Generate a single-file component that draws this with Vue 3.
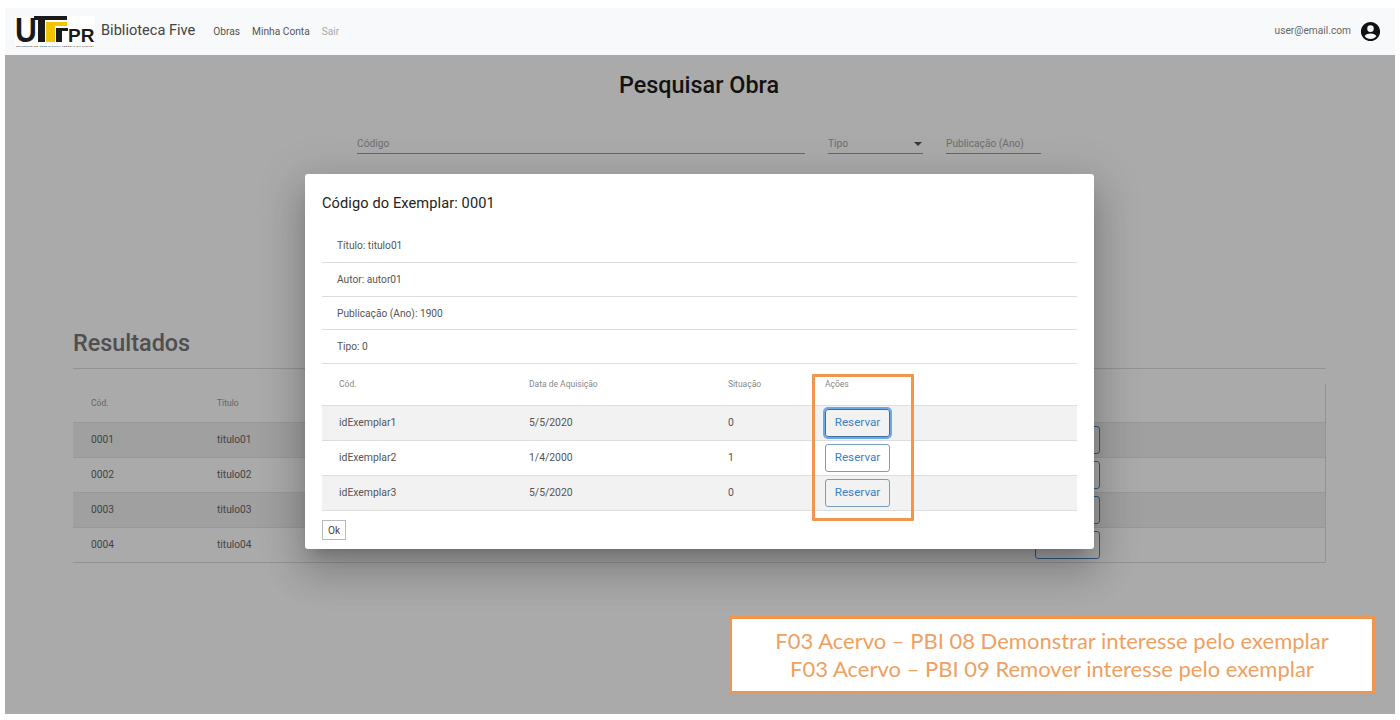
<template>
  <div class="frame">
    <nav class="navbar">
      <svg class="logo" width="80" height="31" viewBox="0 0 80 31">
        <rect width="80" height="31" fill="#fff" />
        <text transform="translate(0 26) scale(0.84 1)" class="logo-big">U</text>
        <path d="M19 0h33v4H30v22h-7V4h-4z" fill="#1a1a1a" />
        <path d="M31 6h21v4H40v16h-9z" fill="#f5c400" />
        <path d="M41 12h12v3h-6v11h-6z" fill="#1a1a1a" />
        <text x="53" y="26" class="logo-pr">PR</text>
        <text x="1" y="30.500" class="logo-small" textLength="78">UNIVERSIDADE TECNOLÓGICA FEDERAL DO PARANÁ</text>
      </svg>
      <span class="brand">Biblioteca Five</span>
      <a class="nav-link">Obras</a>
      <a class="nav-link">Minha Conta</a>
      <a class="nav-link muted">Sair</a>
      <span class="user">user@email.com</span>
      <svg class="user-icon" width="23" height="23" viewBox="0 0 24 24">
        <path fill="#111" d="M12 2C6.48 2 2 6.48 2 12s4.48 10 10 10 10-4.48 10-10S17.52 2 12 2zm0 3.6a3.4 3.4 0 1 1 0 6.8 3.4 3.4 0 0 1 0-6.8zm0 14.2c-2.6 0-4.9-1.2-6.2-3.1.9-1.6 4.2-2.5 6.2-2.5s5.300.9 6.200 2.500c-1.300 1.900-3.600 3.100-6.200 3.100z" />
      </svg>
    </nav>

    <main class="content">
      <h1 class="page-title">Pesquisar Obra</h1>
      <div class="filters">
        <div class="field code">Código</div>
        <div class="field type">Tipo<span class="caret"></span></div>
        <div class="field year">Publicação (Ano)</div>
      </div>

      <h2 class="results-title">Resultados</h2>
      <div class="results">
        <div class="result-row head">
          <span>Cód.</span>
          <span>Título</span>
        </div>
        <div v-for="obra in obras" :key="obra.cod" class="result-row">
          <span>{{ obra.cod }}</span>
          <span>{{ obra.titulo }}</span>
          <button class="btn-outline ghost"></button>
        </div>
      </div>
    </main>

    <div class="overlay"></div>

    <section class="modal">
      <h3 class="modal-title">Código do Exemplar: 0001</h3>
      <ul class="info">
        <li v-for="line in info" :key="line">{{ line }}</li>
      </ul>
      <div class="ex-row ex-head">
        <span>Cód.</span>
        <span>Data de Aquisição</span>
        <span>Situação</span>
        <span>Ações</span>
      </div>
      <div v-for="(ex, i) in exemplares" :key="ex.id" class="ex-row">
        <span>{{ ex.id }}</span>
        <span>{{ ex.data }}</span>
        <span>{{ ex.situacao }}</span>
        <span><button class="btn-outline" :class="{ focused: i === 0 }">Reservar</button></span>
      </div>
      <button class="btn-ok">Ok</button>
      <div class="highlight"></div>
    </section>

    <aside class="callout">
      <div>F03 Acervo – PBI 08 Demonstrar interesse pelo exemplar</div>
      <div>F03 Acervo – PBI 09 Remover interesse pelo exemplar</div>
    </aside>
  </div>
</template>

<script setup>
const obras = [
  { cod: '0001', titulo: 'titulo01' },
  { cod: '0002', titulo: 'titulo02' },
  { cod: '0003', titulo: 'titulo03' },
  { cod: '0004', titulo: 'titulo04' }
]

const info = ['Título: titulo01', 'Autor: autor01', 'Publicação (Ano): 1900', 'Tipo: 0']

const exemplares = [
  { id: 'idExemplar1', data: '5/5/2020', situacao: '0' },
  { id: 'idExemplar2', data: '1/4/2000', situacao: '1' },
  { id: 'idExemplar3', data: '5/5/2020', situacao: '0' }
]
</script>

<style>
html,
body {
  margin: 0;
  background: #fff;
}
</style>

<style scoped>
.frame {
  position: relative;
  box-sizing: border-box;
  width: 1390px;
  height: 706px;
  margin: 8px 0 0 5px;
  overflow: hidden;
  font-family: Roboto, "Liberation Sans", sans-serif;
  color: #212529;
  background: #fff;
}

.navbar {
  position: relative;
  z-index: 3;
  display: flex;
  align-items: center;
  height: 47px;
  padding: 0 13px 0 10px;
  box-sizing: border-box;
  background: #f8f9fa;
}

.logo {
  margin-right: 6px;
  overflow: visible;
}

.logo-big {
  font: 700 36px "Liberation Sans", sans-serif;
  fill: #1a1a1a;
}

.logo-pr {
  font: 700 19px "Liberation Sans", sans-serif;
  fill: #1a1a1a;
}

.logo-small {
  font: 700 2.400px "Liberation Sans", sans-serif;
  fill: #333;
}

.brand {
  margin-right: 18px;
  font-size: 14.600px;
  color: #444;
  position: relative;
  top: -2px;
}

.nav-link {
  margin-right: 12px;
  font-size: 10.200px;
  color: #555;
}

.nav-link.muted {
  color: #aaa;
}

.user {
  margin-left: auto;
  margin-right: 8px;
  font-size: 10.200px;
  color: #666;
  position: relative;
  top: -1px;
}

.page-title {
  margin: 0;
  padding: 17px 2px 0 0;
  font-size: 23.400px;
  line-height: 26px;
  font-weight: 500;
  text-align: center;
  color: #1c1c1c;
}

.filters {
  display: flex;
  gap: 23px;
  margin: 30px 0 0 352px;
}

.field {
  box-sizing: border-box;
  height: 26px;
  padding-top: 10px;
  font-size: 10.200px;
  line-height: 12px;
  color: #a8a8a8;
  border-bottom: 1px solid #999;
  position: relative;
}

.code {
  width: 448px;
}

.type {
  width: 95px;
}

.year {
  width: 95px;
}

.caret {
  position: absolute;
  right: 1px;
  top: 14px;
  border: 4px solid transparent;
  border-top-color: #555;
  border-bottom: 0;
}

.results-title {
  margin: 173px 0 0 68px;
  width: 1253px;
  padding-bottom: 9px;
  font-size: 23.400px;
  line-height: 32px;
  font-weight: 500;
  color: #777;
  border-bottom: 1px solid #ddd;
}

.results {
  box-sizing: border-box;
  width: 1253px;
  margin: 15px 0 0 68px;
  border-right: 1px solid #ddd;
  font-size: 10.200px;
  color: #666;
}

.result-row {
  display: grid;
  grid-template-columns: 126px 818px 65px;
  align-items: center;
  height: 35px;
  padding-left: 18px;
  padding-bottom: 1px;
  border-top: 1px solid #e4e4e4;
  box-sizing: border-box;
}

.result-row > button {
  margin-bottom: -1px;
}

.result-row:nth-child(even) {
  background: #f0f0f0;
}

.result-row:last-child {
  height: 36px;
  border-bottom: 1px solid #ddd;
}

.head {
  height: 38px;
  border-top: 0;
  font-size: 8.500px;
  color: #999;
}

.overlay {
  position: absolute;
  inset: 0;
  z-index: 1;
  background: rgba(0, 0, 0, 0.333);
}

.modal {
  position: absolute;
  z-index: 2;
  left: 300px;
  top: 166px;
  width: 789px;
  height: 375px;
  box-sizing: border-box;
  padding: 0 17px;
  background: #fff;
  border-radius: 3px;
  box-shadow: 0 11px 15px -7px rgba(0, 0, 0, 0.2), 0 24px 38px 3px rgba(0, 0, 0, 0.14), 0 9px 46px 8px rgba(0, 0, 0, 0.12);
}

.modal-title {
  margin: 0;
  padding-top: 20px;
  height: 55px;
  box-sizing: border-box;
  font-size: 14.600px;
  line-height: 18px;
  font-weight: 400;
  letter-spacing: 0.1px;
  color: #222;
}

.info {
  margin: 0;
  padding: 0;
  list-style: none;
  font-size: 10.200px;
  color: #555;
}

.info li {
  display: flex;
  align-items: center;
  height: 33.750px;
  box-sizing: border-box;
  padding-left: 15px;
  border-bottom: 1px solid #ddd;
}

.info li:nth-child(3) {
  padding-top: 1px;
}

.ex-row {
  display: grid;
  grid-template-columns: 190px 199px 97px 1fr;
  align-items: center;
  height: 35px;
  box-sizing: border-box;
  padding-left: 17px;
  padding-bottom: 1px;
  font-size: 10.400px;
  color: #555;
  border-bottom: 1px solid #ddd;
}

.ex-row:nth-child(even) {
  background: #f2f2f2;
}

.ex-head {
  height: 42px;
  font-size: 8.500px;
  color: #888;
  padding-bottom: 2px;
}

.btn-outline {
  display: block;
  box-sizing: border-box;
  width: 65px;
  height: 28px;
  margin: 0;
  padding: 0 0 2px;
  border: 1px solid #7a9dbc;
  border-radius: 3px;
  background: transparent;
  color: #3a80c8;
  font-family: inherit;
  font-size: 11.700px;
}

.btn-outline.focused {
  border-color: #3d6f9f;
  box-shadow: 0 0 0 2px #6aa8ea;
}

.btn-outline.ghost {
  border-color: #4f86c0;
}

.btn-ok {
  display: block;
  box-sizing: border-box;
  width: 24px;
  height: 20px;
  margin-top: 9px;
  padding: 0;
  border: 1px solid #bbb;
  background: #fff;
  color: #444;
  font-family: inherit;
  font-size: 10.200px;
}

.highlight {
  position: absolute;
  left: 507px;
  top: 200px;
  width: 102px;
  height: 147px;
  box-sizing: border-box;
  border: 3px solid #f0964f;
  border-radius: 1px;
  pointer-events: none;
}

.callout {
  position: absolute;
  z-index: 2;
  left: 724px;
  top: 608px;
  width: 646px;
  height: 78px;
  box-sizing: border-box;
  border: 3px solid #f0964f;
  background: #fff;
  display: flex;
  flex-direction: column;
  justify-content: center;
  padding-bottom: 1px;
  text-align: center;
  font-family: Lato, "Open Sans", sans-serif;
  font-size: 22px;
  line-height: 28px;
  color: #f0a060;
}
</style>
